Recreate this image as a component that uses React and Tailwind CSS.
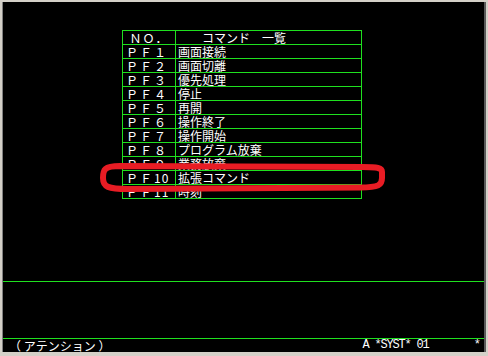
import React from 'react';

const GREEN = 'border-[#1fe01f]';

// [prefix, number, label]
const commands = [
  ['ＰＦ', '１', '画面接続'],
  ['ＰＦ', '２', '画面切離'],
  ['ＰＦ', '３', '優先処理'],
  ['ＰＦ', '４', '停止'],
  ['ＰＦ', '５', '再開'],
  ['ＰＦ', '６', '操作終了'],
  ['ＰＦ', '７', '操作開始'],
  ['ＰＦ', '８', 'プログラム放棄'],
  ['ＰＦ', '９', '業務放棄'],
  ['ＰＦ', '10', '拡張コマンド'],
  ['ＰＦ', '11', '時刻'],
];

const font = { fontFamily: '"Noto Sans CJK JP", "DejaVu Sans Mono", monospace' };

const Row = ({ children, label }) => (
  <div className={`flex h-[14px] border-t ${GREEN}`}>
    <div className={`flex w-[53px] h-full border-r ${GREEN} text-[12px] leading-[13px] text-white whitespace-pre`}>
      {children}
    </div>
    <div className="flex-1 h-full pl-[2px] text-[12px] leading-[13px] text-white whitespace-pre">
      {label}
    </div>
  </div>
);

const App = () => {
  return (
    <div className="relative w-[488px] h-[356px] bg-[#d4d0c8] pt-[2px] pl-[2px] pr-[2px] pb-[4px]" style={font}>
      {/* Terminal screen */}
      <div className="flex flex-col h-[350px] bg-black border-l border-[#808080] border-r-2 border-r-[#5a5a5a]">
        {/* Command list */}
        <div className="pt-[28px] pl-[119px]">
          <div className={`w-[240px] h-[169px] border-l border-r border-b ${GREEN}`}>
            <Row label="　　コマンド　一覧">
              <span className="w-full text-center tracking-[1px]">ＮＯ．</span>
            </Row>
            {commands.map(([pf, num, label]) => (
              <Row key={pf + num} label={label}>
                <span className="pl-[3px] tracking-[2px]">{pf}</span>
                <span className={num.length > 1 ? 'tracking-[1px]' : ''}>{num}</span>
              </Row>
            ))}
          </div>
        </div>

        <div className="mt-[82px] h-[1px] bg-[#1fe01f]" />
        <div className="h-[56px]" />
        <div className="h-[1px] bg-[#1fe01f]" />

        {/* Status line */}
        <div className="flex items-center h-[13px] text-[12px] leading-[13px] text-white whitespace-pre">
          <span className="pl-[6px]">（ アテンション ）</span>
          <span
            className="ml-[252px] tracking-[-1.2px]"
            style={{ fontFamily: '"Liberation Mono", monospace' }}
          >
            A *SYST* 01
          </span>
          <span className="ml-auto pr-[3px]" style={{ fontFamily: '"Liberation Mono", monospace' }}>
            *
          </span>
        </div>
      </div>

      {/* Hand-drawn highlight around PF10 */}
      <svg className="absolute inset-0 pointer-events-none" width="488" height="356" viewBox="0 0 488 356">
        <path
          d="M120 166 C104 166 103 170 103 178 C103 187 108 189 128 189 L360 187.5 C379 187.5 382 185 382 178 L382 172 C382 168 378 167 362 167 L120 166 Z"
          fill="none"
          stroke="#e81c24"
          strokeWidth="6"
          strokeLinejoin="round"
        />
      </svg>
    </div>
  );
};

export default App;
